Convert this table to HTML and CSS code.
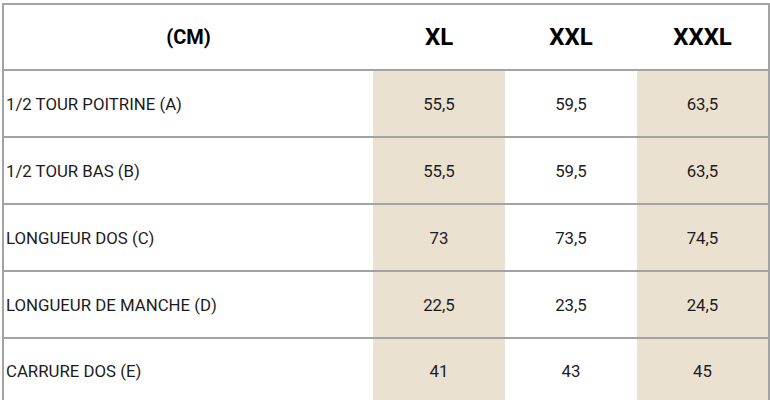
FILE: index.html
```html
<!DOCTYPE html>
<html lang="fr">
<head>
<meta charset="utf-8">
<title>Guide des tailles</title>
<link rel="stylesheet" href="styles.css">
</head>
<body>
<table class="sizes">
  <colgroup>
    <col class="c-label">
    <col class="c-size">
    <col class="c-size">
    <col class="c-last">
  </colgroup>
  <thead>
    <tr>
      <th class="unit">(CM)</th>
      <th>XL</th>
      <th>XXL</th>
      <th>XXXL</th>
    </tr>
  </thead>
  <tbody>
    <tr>
      <td class="label">1/2 TOUR POITRINE (A)</td>
      <td class="shade">55,5</td>
      <td>59,5</td>
      <td class="shade">63,5</td>
    </tr>
    <tr>
      <td class="label">1/2 TOUR BAS (B)</td>
      <td class="shade">55,5</td>
      <td>59,5</td>
      <td class="shade">63,5</td>
    </tr>
    <tr>
      <td class="label">LONGUEUR DOS (C)</td>
      <td class="shade">73</td>
      <td>73,5</td>
      <td class="shade">74,5</td>
    </tr>
    <tr>
      <td class="label">LONGUEUR DE MANCHE (D)</td>
      <td class="shade">22,5</td>
      <td>23,5</td>
      <td class="shade">24,5</td>
    </tr>
    <tr class="last">
      <td class="label">CARRURE DOS (E)</td>
      <td class="shade">41</td>
      <td>43</td>
      <td class="shade">45</td>
    </tr>
  </tbody>
</table>
</body>
</html>
```

FILE: styles.css
```css
html, body {
  margin: 0;
  padding: 0;
  background: #ffffff;
}

body {
  font-family: Roboto, "Liberation Sans", Arial, sans-serif;
  color: #1c1c1c;
}

.sizes {
  margin: 3px 0 0 2px;
  width: 768px;
  table-layout: fixed;
  border-collapse: separate;
  border-spacing: 0;
  border: 2px solid #a3a3a3;
}

.c-label { width: 369px; }
.c-size { width: 132px; }
.c-last { width: 131px; }

.sizes th,
.sizes td {
  padding: 0;
  text-align: center;
  vertical-align: middle;
  border-bottom: 2px solid #a3a3a3;
}

.sizes th {
  height: 64px;
  font-size: 24px;
  font-weight: 700;
  color: #000000;
}

.sizes th.unit {
  font-size: 20px;
}

.sizes td {
  height: 65px;
  font-size: 16.8px;
  font-weight: 400;
}

.sizes td.label {
  text-align: left;
  padding-left: 2px;
}

.sizes td.shade {
  background: #ebe1d1;
}

.sizes tr.last td {
  border-bottom: 0;
  height: 63px;
}
```
